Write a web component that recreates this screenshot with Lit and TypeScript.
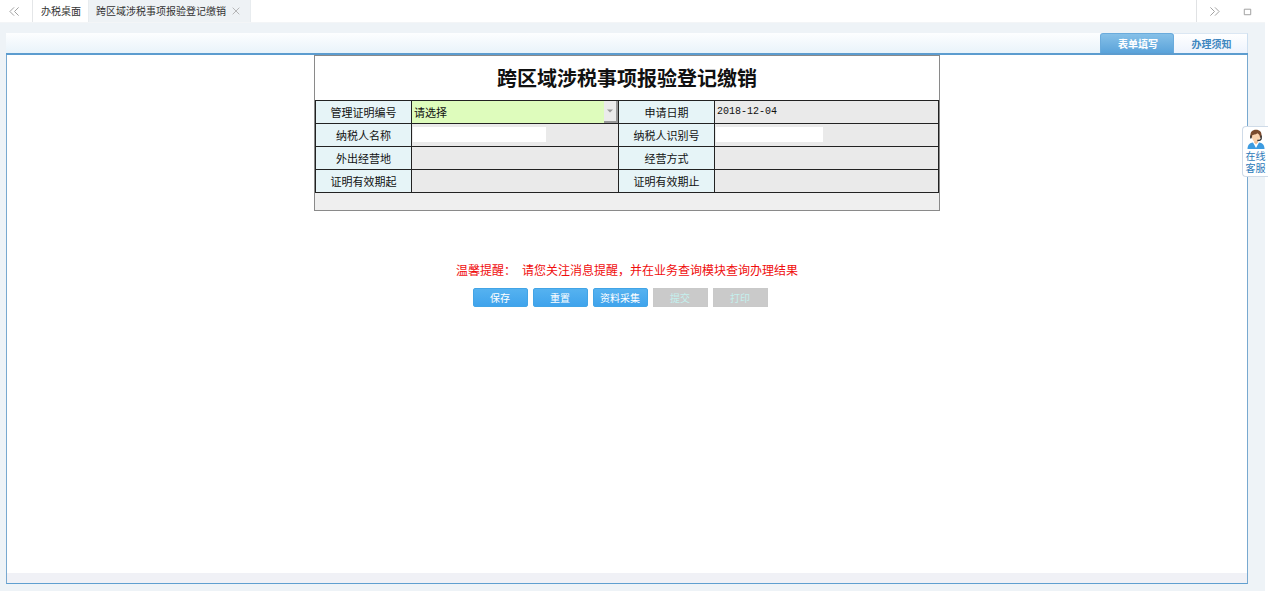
import { LitElement, html, css, svg } from "lit";
import { customElement, state } from "lit/decorators.js";

type Field = { id: string; label: string; kind: "select" | "text" | "short" | "shorter"; value?: string };

const ROWS: Field[][] = [
  [
    { id: "cert", label: "管理证明编号", kind: "select" },
    { id: "date", label: "申请日期", kind: "text", value: "2018-12-04" },
  ],
  [
    { id: "name", label: "纳税人名称", kind: "short" },
    { id: "taxno", label: "纳税人识别号", kind: "shorter" },
  ],
  [
    { id: "place", label: "外出经营地", kind: "text" },
    { id: "mode", label: "经营方式", kind: "text" },
  ],
  [
    { id: "from", label: "证明有效期起", kind: "text" },
    { id: "to", label: "证明有效期止", kind: "text" },
  ],
];

const ACTIONS = [
  { text: "保存", enabled: true },
  { text: "重置", enabled: true },
  { text: "资料采集", enabled: true },
  { text: "提交", enabled: false },
  { text: "打印", enabled: false },
];

const icon = (d: string, size: number) => html`<svg width=${size} height=${size} viewBox="0 0 12 12" fill="none" stroke="currentColor" aria-hidden="true">${svg`<path d=${d}></path>`}</svg>`;

@customElement("declare-form")
export class DeclareForm extends LitElement {
  static styles = css`
    :host { display: block; font-family: "Noto Sans CJK SC", sans-serif; color: #111; }
    .sheet { width: 50.5%; min-width: 560px; margin: 0 auto; box-sizing: border-box; border: 1px solid #8a8a8a; background: #efefef; }
    .title { margin: 0; background: #fff; text-align: center; font-size: 20px; line-height: 44px; font-weight: 700; }
    .grid { width: 100%; table-layout: fixed; border-collapse: collapse; }
    .grid th, .grid td { border: 1px solid #222; padding: 0; height: 22px; line-height: 0; }
    .grid th { background: #e6f4f7; font-weight: 400; }
    .grid td { background: #eaeaea; }
    .c1, .c3 { width: 96px; }
    .c2 { width: 207px; }
    label { display: block; font-size: 11px; line-height: 22px; }
    input { display: block; box-sizing: border-box; width: 100%; height: 22px; margin: 0; padding: 0 2px; border: 0; background: transparent; font: 10px/22px "Liberation Mono", monospace; color: #111; outline: none; }
    .short, .shorter { height: 15px; margin: 0 1px 2px; background: #fff; }
    .short { width: 133px; }
    .shorter { width: 107px; }
    .pick { display: flex; position: relative; background: #defcbc; }
    select { appearance: none; flex: 1; height: 22px; margin: 0; padding: 0 16px 0 2px; border: 0; border-radius: 0; background: transparent; font: 11px/22px "Noto Sans CJK SC", sans-serif; color: #111; outline: none; }
    .arrow { position: absolute; right: 0; top: 0; width: 14px; height: 22px; box-sizing: border-box; background: #ebebeb; border-right: 2px solid #999; border-bottom: 2px solid #999; display: flex; align-items: center; justify-content: center; pointer-events: none; }
    .foot { height: 17px; }
    .notice { margin: 50px 0 0; text-align: center; color: #f00d0d; font-size: 12px; line-height: 18px; }
    .lead { padding-right: 6px; }
    .actions { display: flex; justify-content: center; gap: 5px; margin-top: 9px; padding-right: 14px; }
    .btn { width: 55px; height: 19px; padding: 0; border: 1px solid #42a4e6; border-radius: 2px; background: linear-gradient(#55b2f0, #3fa3ec); color: #fff; font: 10px/16px "Noto Sans CJK SC", sans-serif; }
    .btn:disabled { border-color: #c9c9c9; border-radius: 0; background: #cacaca; color: #c4f0ee; }
  `;

  private control(f: Field) {
    if (f.kind === "select") {
      return html`<div class="pick">
        <select id=${f.id}><option>请选择</option></select>
        <span class="arrow"><svg width="6" height="4" viewBox="0 0 6 4" aria-hidden="true"><path d="M0 0.5H6L3 3.5Z" fill="#999"></path></svg></span>
      </div>`;
    }
    return html`<input id=${f.id} class=${f.kind} type="text" readonly .value=${f.value ?? ""} />`;
  }

  render() {
    return html`
      <section class="sheet">
        <h1 class="title">跨区域涉税事项报验登记缴销</h1>
        <table class="grid">
          <colgroup><col class="c1" /><col class="c2" /><col class="c3" /><col /></colgroup>
          <tbody>
            ${ROWS.map((row) => html`<tr>${row.map((f) => html`<th scope="row"><label for=${f.id}>${f.label}</label></th><td>${this.control(f)}</td>`)}</tr>`)}
          </tbody>
        </table>
        <div class="foot"></div>
      </section>
      <p class="notice"><span class="lead">温馨提醒：</span>请您关注消息提醒，并在业务查询模块查询办理结果</p>
      <div class="actions">
        ${ACTIONS.map((a) => html`<button class="btn" type="button" ?disabled=${!a.enabled}>${a.text}</button>`)}
      </div>
    `;
  }
}

@customElement("app-root")
export class AppRoot extends LitElement {
  static styles = css`
    :host { display: flex; flex-direction: column; min-height: 100vh; box-sizing: border-box; background: #eef3f7; border-right: 3px solid #fff; font-family: "Noto Sans CJK SC", sans-serif; }
    button { margin: 0; padding: 0; border: 0; background: none; font: 10px/22px "Noto Sans CJK SC", sans-serif; color: #333; }
    svg { display: block; }
    .top { display: flex; height: 23px; box-sizing: border-box; background: #fff; border-bottom: 1px solid #f3f5f7; }
    .nav { width: 33px; display: flex; align-items: center; justify-content: center; color: #999; box-sizing: border-box; }
    .prev { border-right: 1px solid #e4e6e8; padding-right: 4px; }
    .home { padding: 0 7px 0 8px; }
    .page { display: flex; align-items: center; background: #eef2f5; padding: 0 9px 0 7px; border-left: 1px solid #e8ecef; border-right: 1px solid #e8ecef; }
    .close { display: flex; align-items: center; height: 20px; color: #aaa; padding-left: 5px; }
    .tools { margin-left: auto; display: flex; border-left: 1px solid #e0e2e4; padding: 0 1px; }
    .panel { flex: 1; display: flex; flex-direction: column; margin: 10px 17px 7px 6px; }
    .head { display: flex; justify-content: flex-end; height: 22px; box-sizing: border-box; border-bottom: 2px solid #5c9ccf; background: linear-gradient(#fdfeff, #e9f3fa); }
    .tab { width: 74px; height: 20px; line-height: 20px; padding-left: 2px; font-weight: 700; color: #3f87c0; background: linear-gradient(#fff, #edf3fd); border-right: 1px solid #cddff0; border-top: 1px solid #dbe7f3; box-sizing: border-box; }
    .tab[aria-selected="true"] { color: #fff; background: linear-gradient(#86c0e8, #5aa3da); border: 1px solid #6aabdc; border-bottom: 0; border-radius: 3px 3px 0 0; }
    .body { flex: 1; border: 1px solid #78a9d0; border-top: 0; border-bottom-color: #5f9fd0; background: #fff; display: flex; flex-direction: column; justify-content: space-between; }
    .strip { height: 10px; background: #f0f1f6; }
    .service { position: fixed; right: 0; top: 126px; width: 26px; height: 51px; box-sizing: border-box; border: 1px solid #cfdbe8; border-right: 0; border-radius: 4px 0 0 4px; background: #fff; color: #2b78b8; font-size: 10px; line-height: 12px; text-decoration: none; display: flex; flex-direction: column; align-items: center; padding-top: 2px; }
    .service svg { margin-bottom: 1px; flex: none; }
  `;

  @state() private tab = 0;

  render() {
    return html`
      <nav class="top">
        <button class="nav prev" aria-label="向左">${icon("M5.5 1.5L1 6L5.5 10.5M10.5 1.5L6 6L10.5 10.5", 11)}</button>
        <button class="home">办税桌面</button>
        <div class="page">
          <button>跨区域涉税事项报验登记缴销</button>
          <button class="close" aria-label="关闭">${icon("M2 2L10 10M10 2L2 10", 10)}</button>
        </div>
        <div class="tools">
          <button class="nav" aria-label="向右">${icon("M1.5 1.5L6 6L1.5 10.5M6.5 1.5L11 6L6.5 10.5", 11)}</button>
          <button class="nav" aria-label="最大化">${icon("M2.5 3.5H9.5V9.5H2.5Z", 11)}</button>
        </div>
      </nav>
      <main class="panel">
        <div class="head" role="tablist">
          ${["表单填写", "办理须知"].map((t, i) => html`<button class="tab" role="tab" aria-selected=${this.tab === i ? "true" : "false"} @click=${() => (this.tab = i)}>${t}</button>`)}
        </div>
        <div class="body">
          <declare-form></declare-form>
          <div class="strip"></div>
        </div>
      </main>
      <a class="service" href="#">
        <svg width="18" height="20" viewBox="0 0 18 20" aria-hidden="true">
          <path d="M0.5 20C0.5 15.5 3 14 6 13.5H12C15 14 17.5 15.5 17.5 20Z" fill="#3d9be0"></path>
          <path d="M6 13.5L9 19L12 13.5L11 11.5H7Z" fill="#fff"></path>
          <path d="M7.2 11H10.8V13.6L9 15.6L7.2 13.6Z" fill="#f2bd93"></path>
          <ellipse cx="9" cy="7.6" rx="4.2" ry="5" fill="#fbd3ae"></ellipse>
          <path d="M3.6 8.5C2.6 3 5.4 0.8 9 0.8S15.4 3 14.4 8.5L13 8.8C13 6.5 12 5.2 10.4 4.2C8.5 5.8 6 5.6 5.2 6.2L5 8.8Z" fill="#7a4a2c"></path>
          <path d="M3.8 6.5V9.5M14.2 6.5V9.5C14.2 11 12.5 11.6 10.3 11.5" fill="none" stroke="#333" stroke-width="1.3"></path>
        </svg>
        <span>在线</span><span>客服</span>
      </a>
    `;
  }
}
